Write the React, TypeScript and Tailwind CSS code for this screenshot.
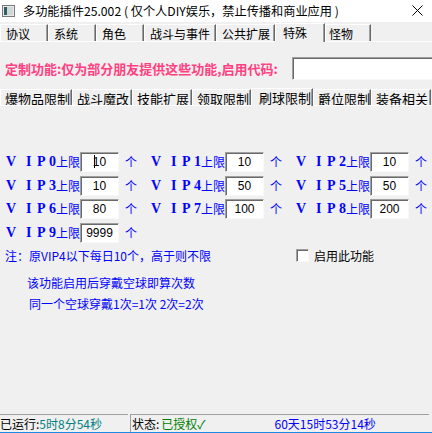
import React from "react";

const F = "font-['Noto_Sans_CJK_SC','Noto_Sans',sans-serif]";

function Tab({ label, w, selected, size = "text-[12px]", h, pl = 5 }: { label: string; w: number; selected?: boolean; size?: string; h: number; pl?: number }) {
  return (
    <div
      className={`flex items-start shrink-0 bg-[#f0f0f0] border-t border-l border-white border-r border-r-[#696969] shadow-[inset_-1px_0_0_#a0a0a0] ${size} text-black leading-none pt-[2px] ${selected ? "relative z-10 -mb-[1px]" : ""}`}
      style={{ width: w, height: selected ? h + 2 : h, paddingLeft: pl }}
    >
      <span className="leading-[14px] whitespace-nowrap">{label}</span>
    </div>
  );
}

function Sunken({ children, className = "" }: { children?: React.ReactNode; className?: string }) {
  return (
    <div className={`bg-white border-t border-l border-[#a0a0a0] border-b border-r border-b-[#f8f8f8] border-r-[#f8f8f8] shadow-[inset_1px_1px_0_#696969] ${className}`}>
      {children}
    </div>
  );
}

function VipCell({ n, v, caret }: { n: string; v: string; caret?: boolean }) {
  const L = "font-['Liberation_Serif',serif] font-bold text-[14px] leading-none shrink-0";
  return (
    <div className="flex items-center w-[145px] shrink-0 h-[20px]">
      <div className="flex items-center w-[75px] shrink-0 text-[#0000ff] whitespace-nowrap">
        <span className={`${L} w-[21px] pl-[1px]`}>V</span>
        <span className={`${L} w-[11px]`}>I</span>
        <span className={`${L} w-[12px]`}>P</span>
        <span className={`${L} w-[7px]`}>{n}</span>
        <span className="text-[12px] leading-none shrink-0">上限</span>
      </div>
      <Sunken className="w-[39px] h-[20px] flex items-center justify-center shrink-0">
        <span className="font-['Liberation_Sans',sans-serif] text-[12px] leading-none text-black relative">
          {caret && <span className="absolute left-[1px] -top-[1px] w-[1px] h-[13px] bg-black" />}
          {v}
        </span>
      </Sunken>
      <span className="ml-[6px] text-[12px] text-[#0000ff] leading-none">个</span>
    </div>
  );
}

export default function App() {
  const tabs1 = [
    ["协议", 48],
    ["系统", 48],
    ["角色", 48],
    ["战斗与事件", 72],
    ["公共扩展", 59],
    ["特殊", 50],
    ["怪物", 46],
  ] as const;
  const tabs2 = [
    ["爆物品限制", 72],
    ["战斗魔改", 60],
    ["技能扩展", 60],
    ["领取限制", 59],
    ["刷球限制", 62],
    ["爵位限制", 58],
    ["装备相关", 60],
  ] as const;
  return (
    <div className={`w-[432px] h-[433px] bg-[#f0f0f0] flex flex-col overflow-hidden ${F}`}>
      {/* title bar */}
      <div className="h-[22px] bg-white flex items-center shrink-0 relative">
        <svg width="13" height="12" viewBox="0 0 13 12" className="ml-[2px]">
          <rect x="0.5" y="0.5" width="12" height="11" fill="#e8e8e8" stroke="#7a7a7a" />
          <rect x="2" y="2" width="3" height="8" fill="#2f5f5f" />
          <rect x="5" y="2" width="6" height="8" fill="#cfd8d8" />
        </svg>
        <span className="ml-[8px] text-[12.2px] text-black leading-none">多功能插件25.002 ( 仅个人DIY娱乐，禁止传播和商业应用 )</span>
        <svg width="11" height="11" viewBox="0 0 11 11" className="absolute left-[412px] top-[5px]">
          <path d="M0.5 0.5 L10.5 10.5 M10.5 0.5 L0.5 10.5" stroke="#000" strokeWidth="1" />
        </svg>
      </div>

      {/* tab row 1 */}
      <div className="h-[19px] flex items-end shrink-0">
        {tabs1.map(([l, w]) => (
          <Tab key={l} label={l} w={w} h={17} selected={l === "特殊"} pl={l === "怪物" ? 3 : l === "特殊" ? 7 : 5} />
        ))}
      </div>
      <div className="h-[1px] bg-white shrink-0" />

      {/* red row */}
      <div className="mt-[15px] h-[23px] flex items-center shrink-0">
        <span className="ml-[5px] text-[13px] font-bold text-[#ff4081] leading-none whitespace-nowrap">定制功能:仅为部分朋友提供这些功能,启用代码:</span>
        <Sunken className="ml-auto w-[142px] h-[23px] -mr-[2px]" />
      </div>

      {/* tab row 2 */}
      <div className="mt-[7px] h-[18px] flex items-end shrink-0">
        {tabs2.map(([l, w]) => (
          <Tab key={l} label={l} w={w} h={16} size="text-[13px]" selected={l === "刷球限制"} pl={l === "刷球限制" ? 7 : 4} />
        ))}
      </div>
      <div className="h-[1px] bg-white shrink-0" />

      {/* VIP grid */}
      <div className="mt-[46px] ml-[5px] flex flex-col gap-[3.5px] shrink-0">
        <div className="flex">
          <VipCell n="0" v="10" caret />
          <VipCell n="1" v="10" />
          <VipCell n="2" v="10" />
        </div>
        <div className="flex">
          <VipCell n="3" v="10" />
          <VipCell n="4" v="50" />
          <VipCell n="5" v="50" />
        </div>
        <div className="flex">
          <VipCell n="6" v="80" />
          <VipCell n="7" v="100" />
          <VipCell n="8" v="200" />
        </div>
        <div className="flex">
          <VipCell n="9" v="9999" />
        </div>
      </div>

      {/* notes */}
      <div className="mt-[3px] h-[20px] flex items-center shrink-0 text-[12px] leading-none">
        <span className="ml-[5px] text-[#0000ff] w-[291px]">注：原VIP4以下每日10个，高于则不限</span>
        <Sunken className="w-[13px] h-[13px]" />
        <span className="ml-[5px] text-black">启用此功能</span>
      </div>
      <div className="mt-[7px] h-[20px] flex items-center shrink-0 text-[12px] leading-none text-[#0000ff]">
        <span className="ml-[27px]">该功能启用后穿戴空球即算次数</span>
      </div>
      <div className="mt-[1px] h-[20px] flex items-center shrink-0 text-[12px] leading-none text-[#0000ff]">
        <span className="ml-[29px]">同一个空球穿戴1次=1次 2次=2次</span>
      </div>

      <div className="flex-1" />

      {/* status bar */}
      <div className="h-[19px] flex shrink-0 text-[12px] leading-none relative">
        <div className="w-[128px] border-t border-[#a0a0a0] flex items-center">
          <span className="text-black">已运行:</span>
          <span className="text-[#008080]">5时8分54秒</span>
        </div>
        <div className="ml-[2px] w-[299px] border-t border-l border-[#a0a0a0] flex items-center">
          <span className="ml-[1px] text-black">状态:</span>
          <span className="ml-[2px] text-[#008000]">已授权✓</span>
          <span className="ml-[69px] text-[#0000ff]">60天15时53分14秒</span>
        </div>
        <div className="absolute left-0 right-0 bottom-0 h-[1px] bg-[#1e88e5]" />
      </div>
    </div>
  );
}
